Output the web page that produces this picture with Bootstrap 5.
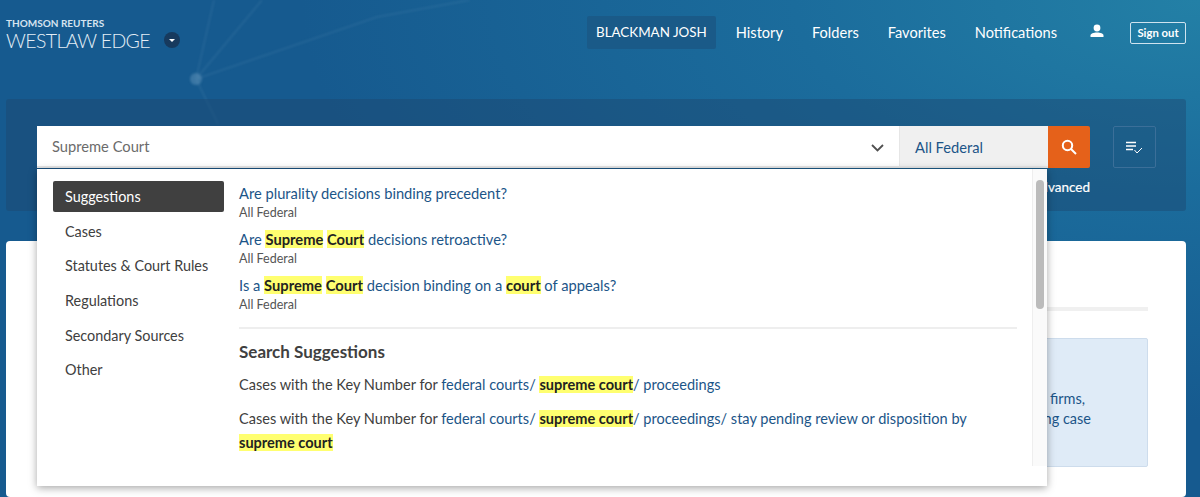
<!DOCTYPE html>
<html lang="en">
<head>
<meta charset="UTF-8">
<title>Westlaw Edge</title>
<link rel="stylesheet" href="https://cdn.jsdelivr.net/npm/bootstrap@5.3.0/dist/css/bootstrap.min.css">
<style>
html, body { height: 497px; overflow: hidden; }
body {
    font-family: "Lato", "Liberation Sans", sans-serif;
    font-size: 14.7px;
    color: #404040;
    background: radial-gradient(900px 420px at 100% 0%, #2380a6 0%, #1b6c9c 45%, rgba(24, 94, 146, 0) 100%), #165a8f;
    position: relative;
}
.bg-net { position: absolute; left: 0; top: 0; width: 1200px; height: 300px; filter: blur(1px); }
.page { position: relative; padding: 0 14px 0 6px; height: 497px; }
.top-bar { height: 99px; padding-top: 16px; }
.logo-sub { font-size: 10px; font-weight: 700; line-height: 11px; color: #d5e3ef; padding-top: 2px; }
.logo-main { font-size: 19.5px; font-weight: 300; line-height: 23px; color: #e4eef6; letter-spacing: -.6px; }
.logo-caret { width: 16px; height: 16px; border-radius: 50%; background: #173a5e; margin: 16px 0 0 14px; }
.top-link { color: #fff; font-size: 14.6px; text-decoration: none; line-height: 33px; margin-left: 29px; }
.top-link.user-name { background: #1a5a88; font-size: 13.4px; padding: 0 9px; margin-left: 0; margin-right: -9px; border-radius: 2px; }
.user-ico { margin: 0 26px 0 33px; }
.sign-out { border: 1px solid #cfe3ef; border-radius: 2px; color: #fff; font-size: 11.3px; font-weight: 700; line-height: 20px; height: 22px; width: 56px; text-align: center; text-decoration: none; white-space: nowrap; margin-top: 6px; }
.search-band { height: 112px; background: rgba(28, 70, 110, .45); border-radius: 3px; padding: 27px 30px 0 31px; position: relative; }
.search-box { height: 42px; }
.search-input { width: 862px; background: #fff; padding: 0 15px; line-height: 42px; color: #6b6b6b; border-bottom: 2px solid #e6e6e6; }
.search-scope { width: 149px; background: #f0f0f0; padding: 0 15px; line-height: 42px; color: #1c5588; border-bottom: 2px solid #e6e6e6; border-left: 1px solid #e6e6e6; }
.search-go { width: 42px; background: #e5611a; border-radius: 0 2px 2px 0; }
.list-btn { width: 43px; height: 42px; margin-left: 23px; border: 1px solid #3b6f99; border-radius: 2px; }
.adv-link { position: absolute; right: 96px; top: 78px; color: #fff; font-size: 13.5px; font-weight: 400; -webkit-text-stroke: .2px #fff; }
.main-panel { margin-top: 30px; height: 256px; background: #fff; border-radius: 4px; padding: 66px 38px 0 40px; }
.tab-rule { height: 4px; background: #f0f0f0; }
.info-box { margin-top: 27px; height: 129px; background: #dfebf7; border: 1px solid #cddcec; border-radius: 2px; padding-top: 50px; color: #1c5588; font-size: 14.5px; line-height: 19.5px; text-align: right; }
.info-box div:first-child { padding-right: 62px; }
.info-box div:last-child { padding-right: 56px; }
.drop-menu { position: absolute; left: 37px; top: 169px; width: 1010px; height: 317px; background: #fff; box-shadow: 0 2px 8px rgba(0, 0, 0, .35); }
.drop-side { width: 202px; padding: 12px 0 0 16px; font-size: 14.4px; }
.side-item { display: block; width: 171px; height: 34.7px; line-height: 32px; padding-left: 12px; color: #404040; text-decoration: none; border-radius: 2px; white-space: nowrap; }
.side-item.on { height: 31px; line-height: 31px; margin-bottom: 3.7px; background: #404040; color: #fff; }
.drop-body { width: 778px; padding-top: 15px; }
.sug-row { height: 46px; line-height: 19px; }
.sug-row a, .key-row a { color: #1c5588; text-decoration: none; }
.sug-scope { font-size: 12.5px; line-height: 19px; color: #555; }
.hit { background: #ffff70; color: #222; font-weight: 700; }
.sug-rule { border-top: 2px solid #eee; margin: 5px 0 12px; }
.sug-title { font-size: 17px; font-weight: 700; line-height: 22px; color: #404040; margin-bottom: 10px; }
.key-row { line-height: 24px; margin-bottom: 10px; font-size: 14.55px; }
.scroll-rail { width: 15px; height: 297px; margin-left: 15px; background: #fafafa; border-left: 1px solid #eee; padding: 11px 3px 0 3px; }
.scroll-thumb { height: 129px; background: #bbb; border-radius: 4px; }
</style>
</head>
<body>
<svg class="bg-net" viewBox="0 0 1200 300" fill="none" stroke="#a9cbe2" stroke-opacity=".09" stroke-width="2">
    <path d="M196 79 L214 0 M196 79 L377 17 L470 0 M196 79 L262 0 M196 79 L218 124"/>
    <circle cx="196" cy="79" r="6" fill="#a9cbe2" fill-opacity=".25" stroke="none"/>
</svg>
<div class="page">
    <div class="top-bar d-flex">
        <div>
            <div class="logo-sub">THOMSON REUTERS</div>
            <div class="logo-main">WESTLAW EDGE</div>
        </div>
        <div class="logo-caret d-flex align-items-center justify-content-center">
            <svg width="8" height="5" viewBox="0 0 8 5"><path d="M1 1h6L4 4z" fill="#fff"/></svg>
        </div>
        <div class="ms-auto d-flex align-items-start">
            <a class="top-link user-name" href="#">BLACKMAN JOSH</a>
            <a class="top-link" href="#">History</a>
            <a class="top-link" href="#">Folders</a>
            <a class="top-link" href="#">Favorites</a>
            <a class="top-link" href="#">Notifications</a>
            <svg class="user-ico mt-2" width="14" height="14" viewBox="0 0 14 14"><circle cx="7" cy="4" r="3.4" fill="#fff"/><path d="M0.5 13v-1.6C0.5 9.4 3.5 8.4 7 8.4s6.500 1 6.500 3V13z" fill="#fff"/></svg>
            <a class="sign-out" href="#">Sign out</a>
        </div>
    </div>

    <div class="search-band">
        <div class="search-box d-flex">
            <div class="search-input d-flex justify-content-between align-items-center">
                <span>Supreme Court</span>
                <svg class="mt-1" width="13" height="8" viewBox="0 0 13 8" fill="none" stroke="#505050" stroke-width="1.800"><path d="M1 1l5.500 5.500L12 1"/></svg>
            </div>
            <div class="search-scope">All Federal</div>
            <div class="search-go d-flex align-items-center justify-content-center">
                <svg width="16" height="16" viewBox="0 0 16 16" fill="none" stroke="#fff" stroke-width="2"><circle cx="6.500" cy="6.500" r="4.700"/><path d="M10 10l5 5"/></svg>
            </div>
            <div class="list-btn d-flex align-items-center justify-content-center">
                <svg width="17" height="13" viewBox="0 0 17 13" fill="none" stroke="#fff"><path d="M0 1.500h10M0 5h10M0 8.500h7" stroke-width="1.700"/><path d="M8.500 9l2.500 3 5-5" stroke-width="1"/></svg>
            </div>
        </div>
        <div class="adv-link">Advanced</div>
    </div>

    <div class="main-panel">
        <div class="tab-rule"></div>
        <div class="info-box">
            <div>by firms,</div>
            <div>ing case</div>
        </div>
    </div>
</div>

<div class="drop-menu d-flex">
    <div class="drop-side">
        <a class="side-item on" href="#">Suggestions</a>
        <a class="side-item" href="#">Cases</a>
        <a class="side-item" href="#">Statutes &amp; Court Rules</a>
        <a class="side-item" href="#">Regulations</a>
        <a class="side-item" href="#">Secondary Sources</a>
        <a class="side-item" href="#">Other</a>
    </div>
    <div class="drop-body">
        <div class="sug-row">
            <a href="#">Are plurality decisions binding precedent?</a>
            <div class="sug-scope">All Federal</div>
        </div>
        <div class="sug-row">
            <a href="#">Are <span class="hit">Supreme</span> <span class="hit">Court</span> decisions retroactive?</a>
            <div class="sug-scope">All Federal</div>
        </div>
        <div class="sug-row">
            <a href="#">Is a <span class="hit">Supreme</span> <span class="hit">Court</span> decision binding on a <span class="hit">court</span> of appeals?</a>
            <div class="sug-scope">All Federal</div>
        </div>
        <div class="sug-rule"></div>
        <div class="sug-title">Search Suggestions</div>
        <div class="key-row">Cases with the Key Number for <a href="#">federal courts/ <span class="hit">supreme court</span>/ proceedings</a></div>
        <div class="key-row">Cases with the Key Number for <a href="#">federal courts/ <span class="hit">supreme court</span>/ proceedings/ stay pending review or disposition by <span class="hit">supreme court</span></a></div>
    </div>
    <div class="scroll-rail"><div class="scroll-thumb"></div></div>
</div>
<script src="https://cdn.jsdelivr.net/npm/bootstrap@5.3.0/dist/js/bootstrap.bundle.min.js"></script>
</body>
</html>
